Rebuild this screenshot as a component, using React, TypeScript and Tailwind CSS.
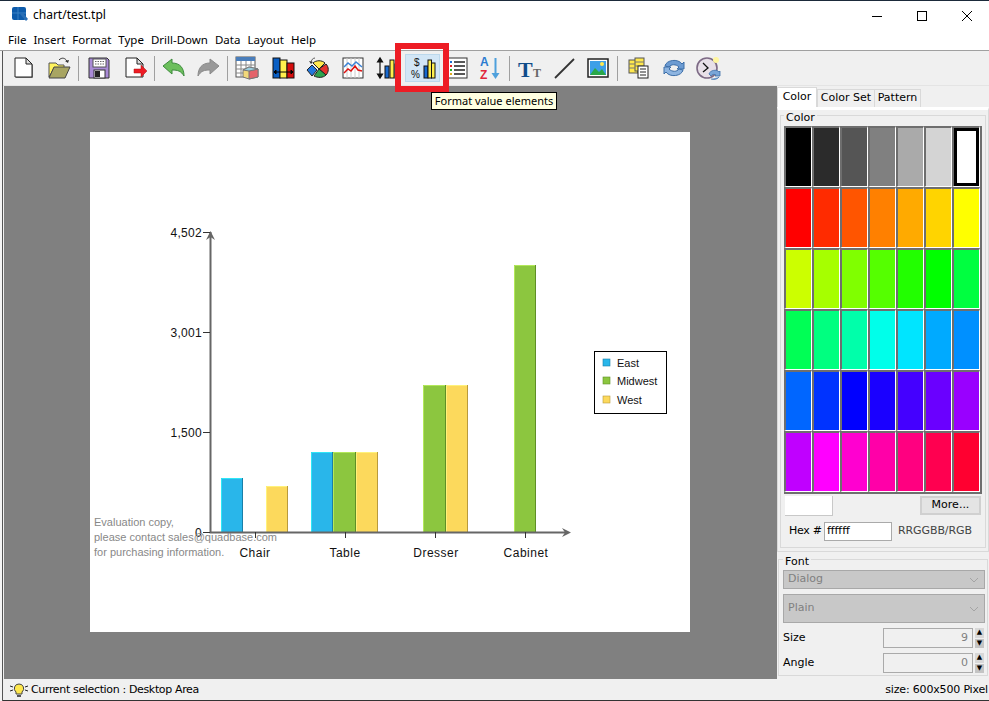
import React from 'react';

const swatches = [
  ['#000000', '#2b2b2b', '#555555', '#808080', '#aaaaaa', '#d4d4d4', '#ffffff'],
  ['#ff0000', '#ff2b00', '#ff5500', '#ff8000', '#ffaa00', '#ffd400', '#ffff00'],
  ['#ccff00', '#a6ff00', '#80ff00', '#55ff00', '#22ff00', '#00ff00', '#00ff40'],
  ['#00ff55', '#00ff80', '#00ffaa', '#00ffea', '#00e5ff', '#00aaff', '#0090ff'],
  ['#0066ff', '#0033ff', '#0000ff', '#1a00ff', '#4400ff', '#6a00ff', '#9900ff'],
  ['#c000ff', '#ff00ff', '#ff00d0', '#ff00a8', '#ff0080', '#ff0050', '#ff0030'],
];

const menus = ['File', 'Insert', 'Format', 'Type', 'Drill-Down', 'Data', 'Layout', 'Help'];

const Ico = ({ children }: { children: React.ReactNode }) => (
  <svg width="26" height="26" viewBox="0 0 26 26" fill="none">{children}</svg>
);

const NewIcon = () => (
  <Ico>
    <path d="M5 4h11l6 6v13H5z" fill="#888" />
    <path d="M4 3h11l6 6v13H4z" fill="#fff" stroke="#222" />
    <path d="M15 3v6h6z" fill="#ddd" stroke="#222" />
  </Ico>
);
const OpenIcon = () => (
  <Ico>
    <path d="M3 8h7l2 2h6v3H8L3 22z" fill="#fff35c" stroke="#555" />
    <path d="M8 12h16l-5 11H3z" fill="#a8a562" stroke="#444" />
    <path d="M13 5c3-3 6-2 8 1" stroke="#333" />
    <path d="M19 6l3 2 1-3z" fill="#333" />
  </Ico>
);
const SaveIcon = () => (
  <Ico>
    <path d="M3 3h18l2 2v18H3z" fill="#a98bd6" stroke="#333" />
    <rect x="7" y="4" width="13" height="8" fill="#fff" stroke="#555" />
    <path d="M9 6.500h9M9 9h9" stroke="#666" strokeDasharray="1.500 1" />
    <rect x="8" y="15" width="11" height="8" fill="#fff" stroke="#333" />
    <rect x="9" y="16" width="5" height="6" fill="#222" />
  </Ico>
);
const ExportIcon = () => (
  <Ico>
    <path d="M4 3h11l6 6v13H4z" fill="#fff" stroke="#222" />
    <path d="M15 3v6h6z" fill="#ddd" stroke="#222" />
    <path d="M12 14h7v-4l6 6-6 6v-4h-7z" fill="#ee1c25" stroke="#a11" strokeWidth=".5" />
  </Ico>
);
const UndoIcon = () => (
  <Ico>
    <path d="M2 11l9-7v4c8 0 12 5 12 13-3-5-6-6-12-6v4z" fill="#6cbf5c" stroke="#3d8b3d" />
  </Ico>
);
const RedoIcon = () => (
  <Ico>
    <path d="M24 11l-9-7v4C7 8 3 13 3 21c3-5 6-6 12-6v4z" fill="#999" stroke="#8a8a8a" />
  </Ico>
);
const TableIcon = () => (
  <Ico>
    <rect x="2" y="2" width="19" height="20" fill="#fff" stroke="#555" />
    <rect x="2" y="2" width="19" height="4" fill="#4a7ebb" />
    <path d="M2 10h19M2 14h19M2 18h19M7 6v16M12 6v16M17 6v16" stroke="#888" />
    <path d="M9 15l6-3 9 2v8l-9 2-6-2z" fill="#f2d87a" stroke="#777" />
    <path d="M15 16l9-2v8l-9 2z" fill="#e4636a" stroke="#777" />
    <path d="M9 15l6-3 9 2-9 2z" fill="#9ccfe0" stroke="#777" />
  </Ico>
);
const ColumnsIcon = () => (
  <Ico>
    <rect x="3" y="3" width="7" height="20" fill="#0a5fc4" stroke="#111" />
    <rect x="10" y="5" width="7" height="18" fill="#ffef4d" stroke="#111" />
    <rect x="17" y="8" width="7" height="15" fill="#d50d0d" stroke="#111" />
    <path d="M4 17h19M4 17l2-2v4zM23 17l-2-2v4z" stroke="#000" fill="#000" />
  </Ico>
);
const PieIcon = () => (
  <Ico>
    <path d="M14 14L8 8c3-3 9-3 12 0z" fill="#ffe84d" stroke="#222" />
    <path d="M14 14l7-5c3 3 3 8 0 11z" fill="#e5322e" stroke="#222" />
    <path d="M14 14l7 6c-3 3-8 3-12 1z" fill="#2ea44f" stroke="#222" />
    <path d="M2 15l5-5 5 5-5 6z" fill="#2277dd" stroke="#222" />
    <path d="M6 8C6 5 8 3 10 3" stroke="#333" strokeWidth=".8" />
    <path d="M4 6l2 3 2-2z" fill="#333" />
  </Ico>
);
const LineIcon = () => (
  <Ico>
    <rect x="3" y="3" width="20" height="20" fill="#fff" stroke="#333" />
    <path d="M7 3v20M11 3v20M15 3v20M19 3v20" stroke="#ccc" />
    <path d="M4 12l4-4 4 3 4-4 6 5" stroke="#3b82d6" strokeWidth="1.500" />
    <path d="M4 18l4-4 3 2 4-5 3 4 4 1" stroke="#d11" strokeWidth="1.500" />
  </Ico>
);
const ScaleIcon = () => (
  <Ico>
    <path d="M5 4v18M2.500 7L5 3l2.500 4zM2.500 19L5 23l2.500-4z" stroke="#111" fill="#111" strokeWidth="1.200" />
    <rect x="10" y="11" width="4" height="12" fill="#1769d0" stroke="#111" />
    <rect x="15" y="5" width="4" height="18" fill="#ffef4d" stroke="#111" />
    <rect x="20" y="9" width="4" height="14" fill="#ffef4d" stroke="#111" />
  </Ico>
);
const ValueIcon = () => (
  <Ico>
    <rect x="14" y="11" width="4" height="12" fill="#1769d0" stroke="#111" />
    <rect x="18" y="5" width="3.500" height="18" fill="#ffef4d" stroke="#111" />
    <rect x="21.500" y="8" width="3.500" height="15" fill="#ffef4d" stroke="#111" />
    <text x="4" y="11" fontSize="10" fill="#111" fontFamily="Liberation Sans, sans-serif">$</text>
    <text x="1" y="23" fontSize="10" fill="#111" fontFamily="Liberation Sans, sans-serif">%</text>
  </Ico>
);
const ListIcon = () => (
  <Ico>
    <rect x="3" y="3" width="20" height="20" fill="#fff" stroke="#333" />
    <path d="M10 7h11M10 11h11M10 15h11M10 19h11" stroke="#222" strokeWidth="1.400" />
    <rect x="6" y="6" width="2" height="2" fill="#1c6fd1" />
    <rect x="6" y="10" width="2" height="2" fill="#d22" />
    <rect x="6" y="14" width="2" height="2" fill="#2a2" />
    <rect x="6" y="18" width="2" height="2" fill="#da2" />
  </Ico>
);
const SortIcon = () => (
  <Ico>
    <text x="3" y="11" fontSize="12" fontWeight="700" fill="#2b7bd0" fontFamily="Liberation Sans, sans-serif">A</text>
    <text x="3" y="24" fontSize="12" fontWeight="700" fill="#e0243a" fontFamily="Liberation Sans, sans-serif">Z</text>
    <path d="M18.500 3v18" stroke="#4ea0dc" strokeWidth="2" />
    <path d="M14.500 18l4 6 4-6z" fill="#4ea0dc" />
  </Ico>
);
const TextIcon = () => (
  <Ico>
    <text x="2" y="22" fontSize="22" fontWeight="700" fill="#0f4c8a" fontFamily="Liberation Serif, serif">T</text>
    <text x="17" y="22" fontSize="12" fontWeight="700" fill="#666" fontFamily="Liberation Serif, serif">T</text>
  </Ico>
);
const DrawLineIcon = () => (
  <Ico>
    <path d="M4 23L23 4" stroke="#333" strokeWidth="1.800" />
  </Ico>
);
const ImageIcon = () => (
  <Ico>
    <rect x="3" y="4" width="20" height="18" fill="#fff" stroke="#222" strokeWidth="1.500" />
    <rect x="5" y="6" width="16" height="14" fill="#3d9fe8" />
    <path d="M5 20l5-7 4 4 3-3 4 6z" fill="#2aa84a" />
    <circle cx="17" cy="9" r="2" fill="#ffe84d" />
  </Ico>
);
const DbIcon = () => (
  <Ico>
    <rect x="3" y="5" width="9" height="13" fill="#ffe84d" stroke="#555" />
    <rect x="9" y="3" width="9" height="13" fill="#ffe84d" stroke="#555" />
    <path d="M3 9h6M9 7h9M3 13h6M9 11h9" stroke="#777" />
    <rect x="12" y="11" width="10" height="12" fill="#fff" stroke="#222" />
    <path d="M14 14h6M14 17h6M14 20h6" stroke="#222" />
  </Ico>
);
const RefreshIcon = () => (
  <Ico>
    <path d="M4 11c1-6 13-8 17-2l2-2v7h-7l2-2c-3-3-8-3-10 0z" fill="#6c9bd2" stroke="#3c6ea8" />
    <path d="M22 15c-1 6-13 8-17 2l-2 2v-7h7l-2 2c3 3 8 3 10 0z" fill="#8db4e0" stroke="#3c6ea8" />
  </Ico>
);
const ClockIcon = () => (
  <Ico>
    <circle cx="12" cy="13" r="10" fill="#e8e0e8" stroke="#7d6a85" strokeWidth="1.600" />
    <path d="M8 8l5 5-5 4" stroke="#111" strokeWidth="1.300" />
    <circle cx="21" cy="5" r="3" fill="#fff6a0" />
    <path d="M14 19c1-4 8-5 10-2l1-1v5h-5l1-1c-2-1-4-1-5 1zM24 22c-1 2-5 3-8 2" fill="#7aa6d8" stroke="#3c6ea8" strokeWidth=".8" />
  </Ico>
);

const Sep = ({ className }: { className: string }) => (
  <div className={`h-[25px] flex justify-center ${className}`}>
    <div className="w-px h-full bg-[#a0a0a0]" />
  </div>
);

const Tool = ({ children, className = '', active = false }: { children: React.ReactNode; className?: string; active?: boolean }) => (
  <div className={`w-[35px] h-[28px] shrink-0 flex items-center justify-center ${active ? 'bg-[#d2e6f6] border border-[#bcd8ec]' : ''} ${className}`}>
    {children}
  </div>
);

const Bar = ({ x, y, w, fill, light, dark }: { x: number; y: number; w: number; fill: string; light: string; dark: string }) => (
  <g fill="none">
    <rect x={x} y={y} width={w} height={400 - y} fill={fill} />
    <path d={`M${x + 0.5} 400V${y + 0.5}H${x + w - 0.5}`} stroke={light} />
    <path d={`M${x + w - 0.5} ${y}V400`} stroke={dark} />
  </g>
);

const east = { fill: '#29b6ea', light: '#2fe6f6', dark: '#1a7fa8' };
const mid = { fill: '#8cc63f', light: '#b3e85a', dark: '#5f8f26' };
const west = { fill: '#fcd95c', light: '#fff27a', dark: '#b99a3c' };

const Chart = () => (
  <svg width="600" height="500" viewBox="0 0 600 500" fontFamily="Liberation Sans, Arial, sans-serif" fontSize="12" className="block">
    <Bar x={131} y={346} w={22} {...east} />
    <Bar x={176} y={354} w={22} {...west} />
    <Bar x={221} y={320} w={22} {...east} />
    <Bar x={243} y={320} w={23} {...mid} />
    <Bar x={266} y={320} w={22} {...west} />
    <Bar x={333} y={253} w={23} {...mid} />
    <Bar x={356} y={253} w={22} {...west} />
    <Bar x={424} y={133} w={22} {...mid} />

    <path d="M120.500 100V400.500H478" stroke="#666" strokeWidth="2" fill="none" />
    <path d="M116 108l4.500-9 4.500 9-4.500-3zM472 396l9 4.500-9 4.500 3-4.500z" fill="#666" />
    <path d="M113 100.500h7M113 200.500h7M113 300.500h7M113 400.500h7" stroke="#333" />
    <path d="M165.500 400v6M255.500 400v6M345.500 400v6M435.500 400v6" stroke="#333" />

    <g textAnchor="end" fill="#111" letterSpacing=".3">
      <text x="112" y="105">4,502</text>
      <text x="112" y="205">3,001</text>
      <text x="112" y="305">1,500</text>
      <text x="112" y="405">0</text>
    </g>
    <g textAnchor="middle" fill="#111" letterSpacing=".5">
      <text x="165" y="425">Chair</text>
      <text x="255" y="425">Table</text>
      <text x="346" y="425">Dresser</text>
      <text x="436" y="425">Cabinet</text>
    </g>
    <g fill="#888" fontSize="11">
      <text x="4" y="394">Evaluation copy,</text>
      <text x="4" y="409">please contact sales@quadbase.com</text>
      <text x="4" y="424">for purchasing information.</text>
    </g>

    <rect x="504.500" y="219.500" width="72" height="62" fill="#fff" stroke="#000" />
    <rect x="513" y="227" width="7" height="7" fill="#29b6ea" stroke="#1a7fa8" strokeWidth=".6" />
    <rect x="513" y="245" width="7" height="7" fill="#8cc63f" stroke="#5f8f26" strokeWidth=".6" />
    <rect x="513" y="264" width="7" height="7" fill="#fcd95c" stroke="#b99a3c" strokeWidth=".6" />
    <g fill="#111" fontSize="11">
      <text x="527" y="235">East</text>
      <text x="527" y="253">Midwest</text>
      <text x="527" y="272">West</text>
    </g>
  </svg>
);

const Spin = () => (
  <div className="w-[9px] h-[20px] flex flex-col gap-px ml-[2px] mr-[1px]">
    <div className="h-[10px] bg-[#d8d8d8] flex items-center justify-center text-[7px] leading-none text-black">▲</div>
    <div className="h-[10px] bg-[#c4c4c4] flex items-center justify-center text-[7px] leading-none text-black">▼</div>
  </div>
);

const Chevron = () => (
  <svg width="10" height="6" viewBox="0 0 10 6" fill="none" className="mr-[1px]"><path d="M1 1l4 4 4-4" stroke="#a4a4a4" /></svg>
);

const panelFont = { fontFamily: '"DejaVu Sans", sans-serif' };

export default function App() {
  return (
    <div className="relative w-[989px] h-[701px] overflow-hidden bg-white flex flex-col text-black font-['Noto_Sans',sans-serif]">
      <div className="h-px bg-[#1b2a3a] shrink-0" />
      {/* title bar */}
      <div className="h-[29px] shrink-0 flex items-center pl-[12px]">
        <svg width="16" height="16" viewBox="0 0 16 16" className="mt-[-1px]">
          <rect x="0" y="0" width="14" height="13" rx="2" fill="#0d5bab" />
          <path d="M6 0v13M0 6h14" stroke="#3b82c4" />
          <path d="M8 7l6 7 2-2-5-6z" fill="#2a6fb5" />
        </svg>
        <span className="ml-[5px] text-[12px] mt-[-1px]">chart/test.tpl</span>
        <div className="ml-auto flex items-center pr-[17px] gap-[35px]">
          <svg width="10" height="10" viewBox="0 0 10 10"><path d="M0 5.500h10" stroke="#000" /></svg>
          <svg width="10" height="10" viewBox="0 0 10 10"><rect x=".5" y=".5" width="9" height="9" fill="none" stroke="#000" /></svg>
          <svg width="10" height="10" viewBox="0 0 10 10"><path d="M0 0l10 10M10 0L0 10" stroke="#000" /></svg>
        </div>
      </div>
      {/* menu */}
      <div className="h-[21px] shrink-0 flex items-center pl-[8px] gap-[7px] text-[11.5px] border-b border-[#a0a0a0]">
        {menus.map((m) => <span key={m}>{m}</span>)}
      </div>
      {/* toolbar */}
      <div className="h-[35px] shrink-0 bg-[#f0f0f0] flex items-center pl-[6px] border-b border-[#e4e4e4]">
        <Tool><NewIcon /></Tool>
        <Tool><OpenIcon /></Tool>
        <Sep className="w-[5px]" />
        <Tool><SaveIcon /></Tool>
        <Tool className="ml-[1px]"><ExportIcon /></Tool>
        <Sep className="w-[4px]" />
        <Tool><UndoIcon /></Tool>
        <Tool className="ml-[-1px]"><RedoIcon /></Tool>
        <Sep className="w-[4px]" />
        <Tool><TableIcon /></Tool>
        <Tool className="ml-[1px]"><ColumnsIcon /></Tool>
        <Tool><PieIcon /></Tool>
        <Tool><LineIcon /></Tool>
        <Tool><ScaleIcon /></Tool>
        <Tool active><ValueIcon /></Tool>
        <Tool className="ml-[-1px]"><ListIcon /></Tool>
        <Tool className="ml-[-2px]"><SortIcon /></Tool>
        <Sep className="w-[4px]" />
        <Tool><TextIcon /></Tool>
        <Tool><DrawLineIcon /></Tool>
        <Tool className="ml-[-1px]"><ImageIcon /></Tool>
        <Sep className="w-[4px]" />
        <Tool className="ml-[2px]"><DbIcon /></Tool>
        <Tool><RefreshIcon /></Tool>
        <Tool className="ml-[-1px]"><ClockIcon /></Tool>
      </div>

      {/* main */}
      <div className="flex-1 min-h-0 flex">
        <div className="w-[4px] bg-[#f0f0f0] shrink-0" />
        <div className="w-[773px] shrink-0 bg-[#808080] pt-[46px] pl-[86px]">
          <div className="w-[600px] h-[500px] bg-white">
            <Chart />
          </div>
        </div>
        <div className="flex-1 bg-[#f0f0f0] text-[11px] flex flex-col" style={panelFont}>
          <div className="flex items-end h-[21px] shrink-0">
            <div className="w-[40px] h-[20px] bg-white border border-b-0 border-[#d9d9d9] flex items-center justify-center">Color</div>
            <div className="w-[58px] h-[18px] border border-b-0 border-[#d9d9d9] flex items-center justify-center">Color Set</div>
            <div className="w-[46px] h-[18px] border border-b-0 border-l-0 border-[#d9d9d9] flex items-center justify-center">Pattern</div>
          </div>
          <div className="h-[445px] shrink-0 border-x border-b border-[#d9d9d9] bg-[#f0f0f0] border-t-[3px] border-t-white px-[2px]">
            <fieldset className="border border-[#d9d9d9] h-[438px] px-[3px]">
              <legend className="relative top-[2px] px-[2px] leading-none">Color</legend>
              <div className="mt-[5px] border-r-2 border-b-2 border-[#6e6e6e] grid grid-cols-7 w-[198px]">
                {swatches.flatMap((row, r) =>
                  row.map((c, i) => {
                    const picked = r === 0 && i === 6;
                    return (
                      <div key={c + r + i} className="h-[61px] border-l-2 border-t-2 border-r border-b border-l-[#6e6e6e] border-t-[#6e6e6e] border-r-white border-b-white">
                        <div className={`w-full h-full ${picked ? 'border-[3px] border-black' : ''}`} style={{ background: c }} />
                      </div>
                    );
                  })
                )}
              </div>
              <div className="flex justify-between w-[197px] mt-[2px] pl-[1px]">
                <div className="w-[48px] h-[20px] bg-white border-r border-b border-[#c8c8c8]" />
                <div className="w-[61px] h-[19px] border-2 border-[#d0d0d0] bg-[#e4e4e4] flex items-center justify-center">More...</div>
              </div>
              <div className="flex items-center mt-[5px] pl-[5px] h-[20px]">
                <span className="w-[35px] whitespace-nowrap tracking-[-0.3px]">Hex #</span>
                <div className="w-[68px] h-[19px] bg-white border border-[#aaa] pl-[2px] flex items-center">ffffff</div>
                <span className="ml-[6px] text-[#444] tracking-[-0.1px] whitespace-nowrap">RRGGBB/RGB</span>
              </div>
            </fieldset>
          </div>
          <fieldset className="mx-px mt-[2px] border border-[#d9d9d9] h-[122px] pl-[4px] pr-[2px]">
            <legend className="relative top-[2px] px-[2px] leading-none">Font</legend>
            <div className="h-[19px] mt-[5px] bg-[#c8c8c8] border border-[#a8a8a8] flex items-center justify-between pl-[4px] pr-[4px] text-[#808080]">Dialog<Chevron /></div>
            <div className="h-[29px] mt-[5px] bg-[#c8c8c8] border border-[#a8a8a8] flex items-center justify-between pl-[4px] pr-[4px] text-[#808080]">Plain<Chevron /></div>
            <div className="flex items-center h-[20px] mt-[5px]">
              <span>Size</span>
              <div className="ml-auto w-[90px] h-[20px] border border-[#aaa] flex items-center justify-end pr-[4px] text-[#808080]">9</div>
              <Spin />
            </div>
            <div className="flex items-center h-[20px] mt-[5px]">
              <span>Angle</span>
              <div className="ml-auto w-[90px] h-[20px] border border-[#aaa] flex items-center justify-end pr-[4px] text-[#808080]">0</div>
              <Spin />
            </div>
          </fieldset>
        </div>
      </div>

      {/* status */}
      <div className="h-[22px] shrink-0 bg-[#f0f0f0] flex items-center pl-[10px] pr-[1px] pt-[1px] text-[11px] border-b border-[#333]" style={panelFont}>
        <svg width="18" height="16" viewBox="0 0 18 16" fill="none">
          <path d="M9 2a4.500 4.500 0 0 0-3 8v2h6v-2a4.500 4.500 0 0 0-3-8z" fill="#ffe84d" stroke="#444" />
          <path d="M7 13h4v2H7z" fill="#555" />
          <path d="M0 4l3 1M0 9l3-1M18 4l-3 1M18 9l-3-1" stroke="#222" />
        </svg>
        <span className="ml-[3px] tracking-[-0.35px]">Current selection : Desktop Area</span>
        <span className="ml-auto tracking-[-0.17px]">size: 600x500 Pixel</span>
      </div>

      {/* window edge, annotation and tooltip laid over the page */}
      <div className="absolute left-0 top-[51px] bottom-0 w-[3px] bg-[#f4f4f4] border-r border-[#555]" />
      <div className="absolute left-[395px] top-[43px] w-[54px] h-[49px] border-[6px] border-[#ed1c24]" />
      <div className="absolute left-[431px] top-[92px] w-[126px] h-[18px] bg-[#ffffe1] border border-black text-[11px] whitespace-nowrap flex items-center justify-center">Format value elements</div>
    </div>
  );
}
